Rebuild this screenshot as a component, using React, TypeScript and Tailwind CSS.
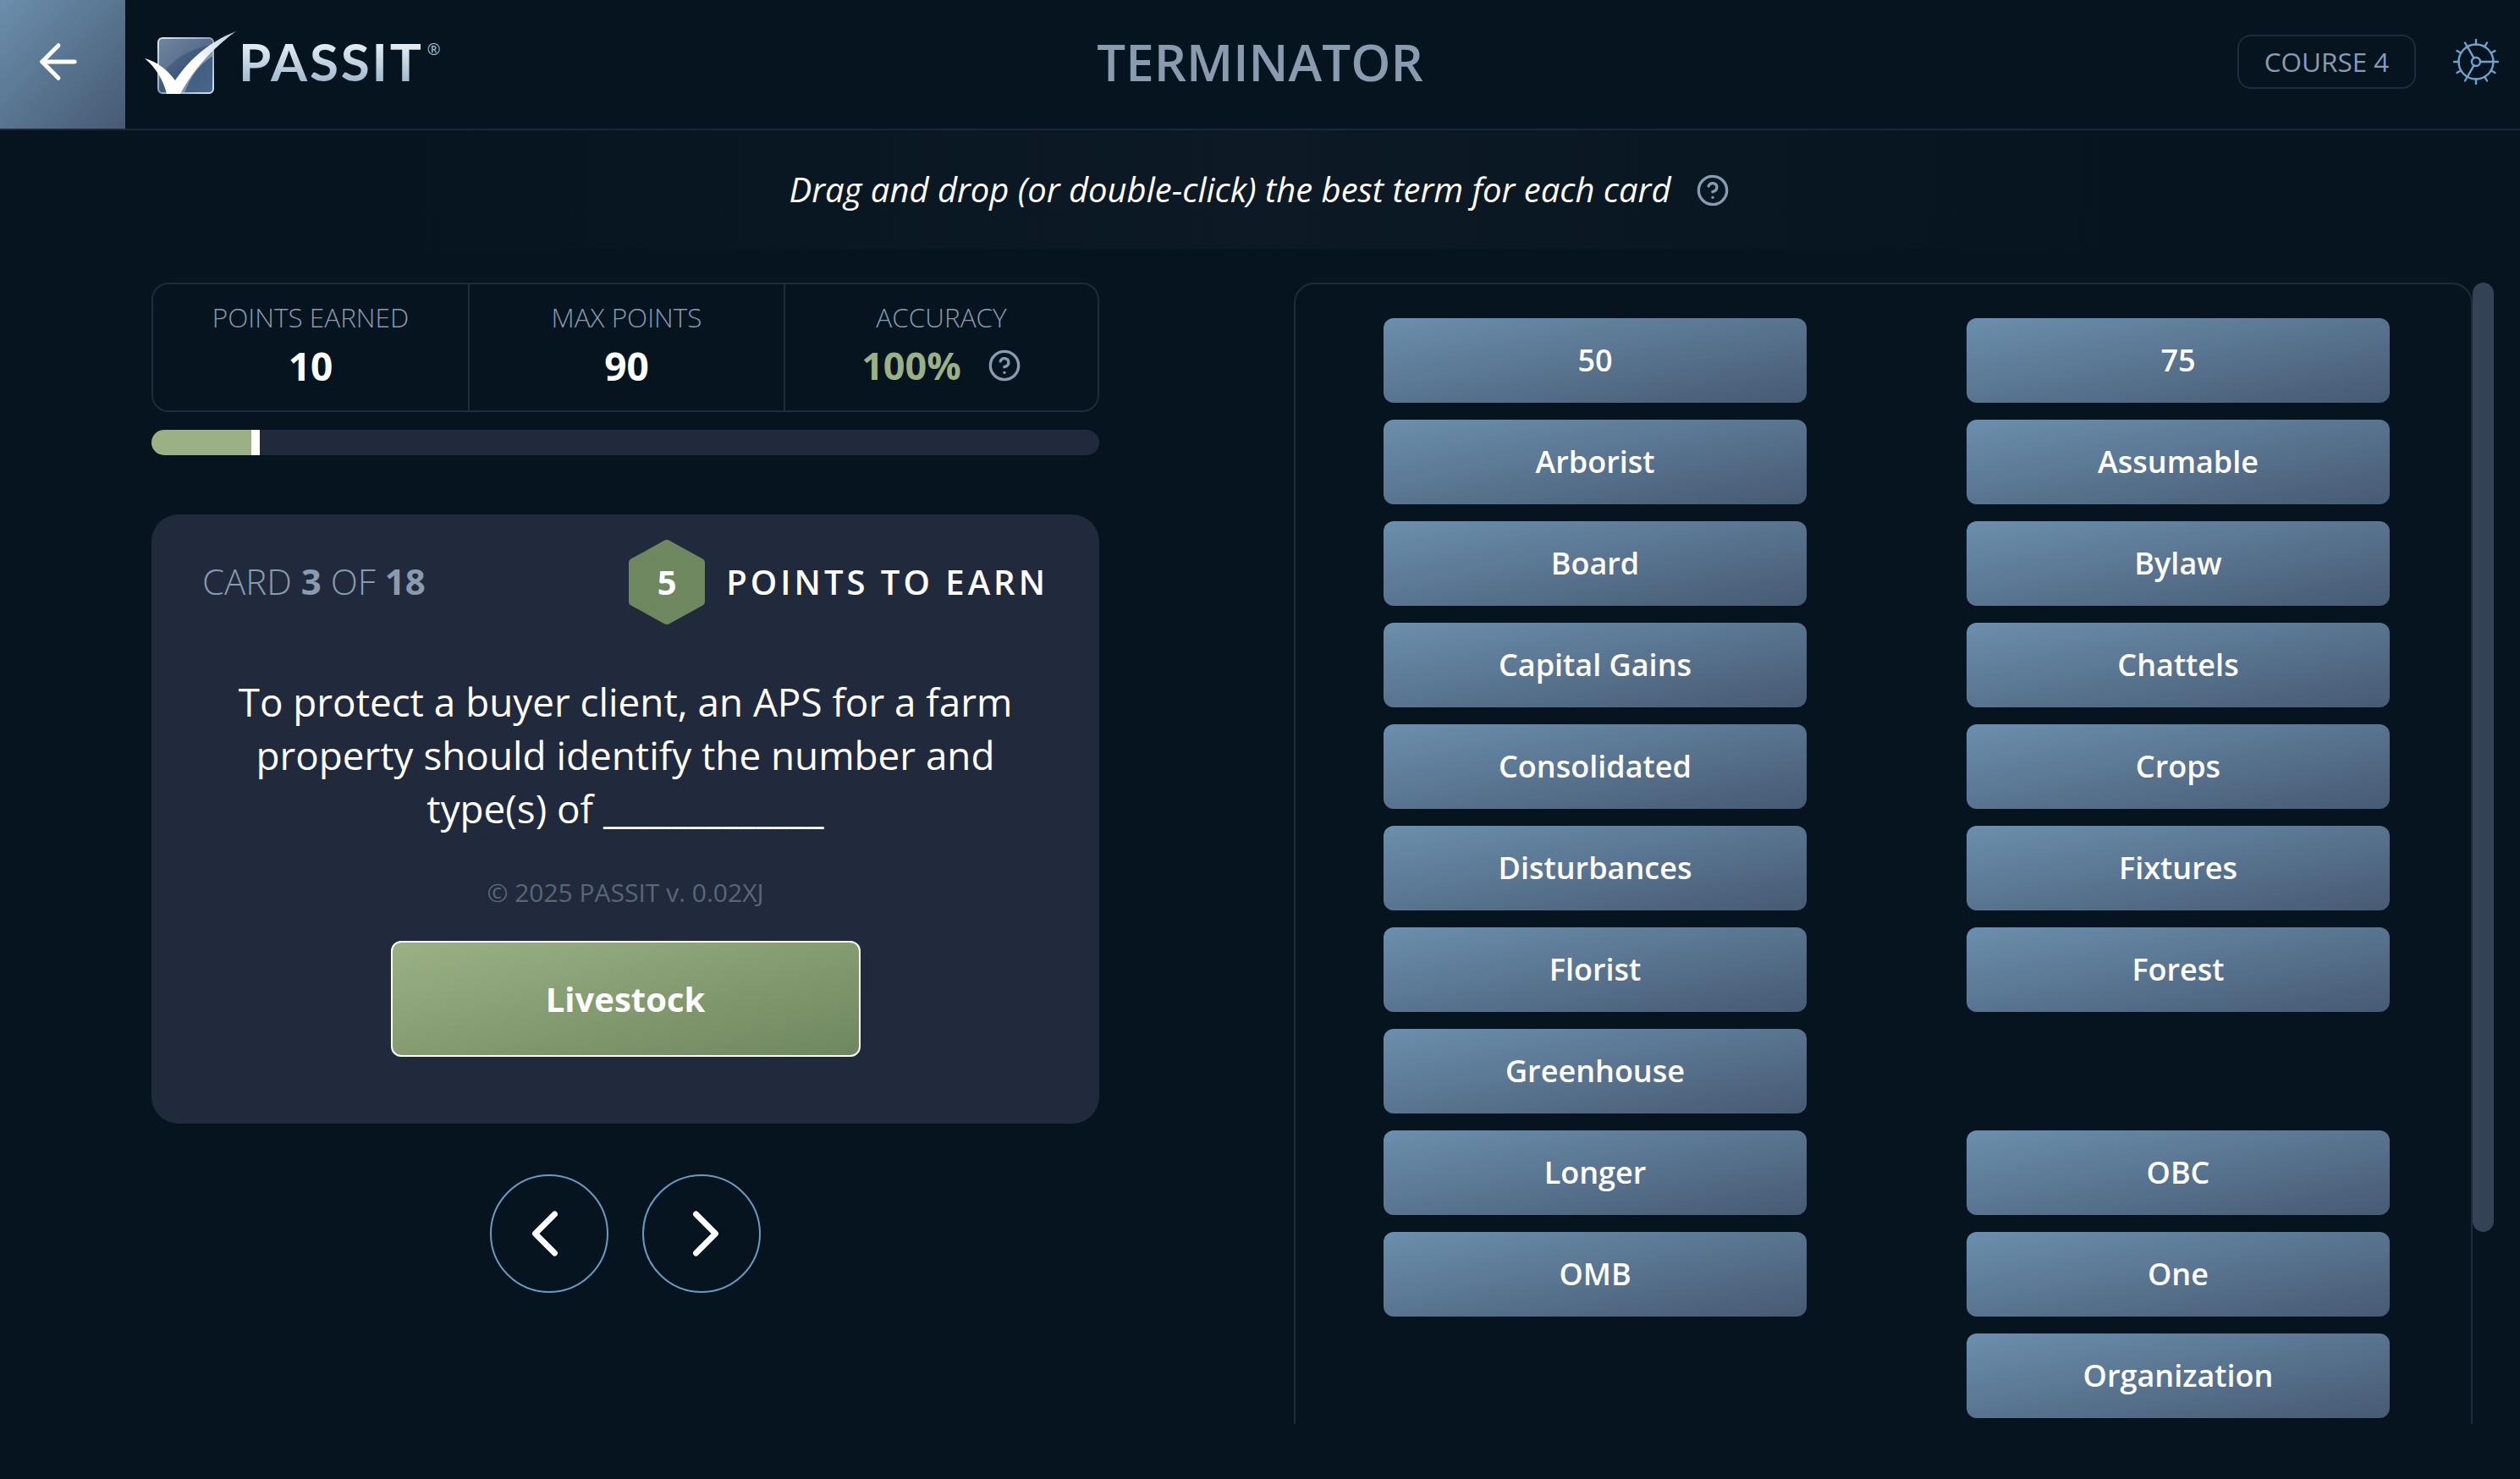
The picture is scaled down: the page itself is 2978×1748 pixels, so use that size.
import React from "react";
import { ArrowLeft, ChevronLeft, ChevronRight, CircleHelp } from "lucide-react";

const left = ["50", "Arborist", "Board", "Capital Gains", "Consolidated", "Disturbances", "Florist", "Greenhouse", "Longer", "OMB", ""];
const right = ["75", "Assumable", "Bylaw", "Chattels", "Crops", "Fixtures", "Forest", "", "OBC", "One", "Organization"];
const terms: string[] = left.flatMap((l, i) => [l, right[i]]);

function Logo() {
  return (
    <svg width="120" height="85" viewBox="165 25 120 85" className="shrink-0">
      <defs>
        <linearGradient id="box" x1="0" y1="0" x2="1" y2="1">
          <stop offset="0" stopColor="#5d7592" />
          <stop offset="0.5" stopColor="#3f5a7c" />
          <stop offset="1" stopColor="#4a678a" />
        </linearGradient>
        <linearGradient id="edge" x1="0" y1="0" x2="1" y2="1">
          <stop offset="0" stopColor="#dfe8f0" />
          <stop offset="0.5" stopColor="#8ea5bb" />
          <stop offset="1" stopColor="#d5e0ea" />
        </linearGradient>
        <linearGradient id="tick" x1="0" y1="1" x2="1" y2="0">
          <stop offset="0" stopColor="#ffffff" />
          <stop offset="0.55" stopColor="#ffffff" />
          <stop offset="1" stopColor="#b9cadb" />
        </linearGradient>
      </defs>
      <rect x="187" y="39" width="65" height="65" rx="5" fill="url(#box)" stroke="url(#edge)" strokeWidth="2" />
      <path d="M188 88 C200 66 222 52 250 47 L250 40 L193 40 C189 40 188 42 188 46 Z" fill="#ffffff" opacity="0.12" />
      <path d="M208 92 C220 74 236 60 252 50 L252 60 C238 68 226 82 218 104 L204 104 Z" fill="#c7d5e3" opacity="0.45" />
      <path d="M171 63 C186 67 197 76 207 89 C224 63 250 42 279 31 C251 51 228 77 213 105 L197 105 C193 88 184 74 171 63 Z" fill="url(#tick)" />
    </svg>
  );
}

function Gear() {
  const ticks = Array.from({ length: 12 }, (_, i) => (i * Math.PI) / 6);
  return (
    <svg width="56" height="56" viewBox="-28 -28 56 56" fill="none" stroke="#6fa3cc" strokeWidth="2.4" strokeLinecap="round">
      <circle r="20.5" />
      <circle r="5" />
      {ticks.map((a, i) => (
        <line key={i} x1={20.5 * Math.cos(a)} y1={20.5 * Math.sin(a)} x2={26 * Math.cos(a)} y2={26 * Math.sin(a)} />
      ))}
      <line x1="5" y1="0" x2="20.5" y2="0" />
      <line x1="-2.5" y1="-4.3" x2="-10.2" y2="-17.8" />
      <line x1="-2.5" y1="4.3" x2="-10.2" y2="17.8" />
    </svg>
  );
}

function Hexagon() {
  return (
    <div className="relative flex h-[100px] w-[90px] shrink-0 items-center justify-center">
      <svg width="90" height="100" viewBox="0 0 90 100" className="absolute inset-0">
        <polygon points="45,5 85,27 85,73 45,95 5,73 5,27" fill="#6f875f" stroke="#6f875f" strokeWidth="10" strokeLinejoin="round" />
      </svg>
      <span className="relative text-[40px] font-bold text-white">5</span>
    </div>
  );
}

function Stat({ label, children, border }: { label: string; children: React.ReactNode; border?: boolean }) {
  return (
    <div className={`flex flex-col items-center pt-[19px] ${border ? "border-r-2 border-[#1f2a3c]" : ""}`}>
      <div className="text-[31.5px] leading-[40px] font-light text-[#8a9bb0]">{label}</div>
      <div className="mt-[9px] flex h-[56px] items-center">{children}</div>
    </div>
  );
}

export default function App() {
  return (
    <div className="flex h-[1748px] w-full flex-col overflow-hidden bg-[#05141f] font-['Open_Sans',sans-serif] text-white">
      <header className="grid h-[154px] shrink-0 grid-cols-[1fr_auto_1fr] border-b-2 border-[#1e2639]">
        <div className="flex items-stretch">
          <button className="flex w-[148px] items-center justify-center bg-gradient-to-br from-[#6b8fad] to-[#475a73] pr-[10px] pb-[6px]">
            <ArrowLeft size={66} strokeWidth={1.8} color="#ffffff" />
          </button>
          <div className="flex items-center pb-[6px] pl-[17px]">
            <Logo />
            <span className="-ml-[3px] mb-[2px] bg-gradient-to-b from-white to-[#8fadc7] bg-clip-text font-['Lato',sans-serif] text-[62px] leading-[72px] font-bold tracking-[0.045em] text-transparent">PASSIT</span>
            <span className="mb-[30px] ml-[4px] text-[19px] leading-none text-[#a8bfd3]">®</span>
          </div>
        </div>
        <h1 className="flex items-center pb-[6px] text-[60px] font-semibold text-[#8a9bb0]">TERMINATOR</h1>
        <div className="flex items-center justify-end pr-[24px] pb-[6px]">
          <div className="flex h-[64px] w-[211px] items-center justify-center rounded-[16px] border-2 border-[#1f2a3c] text-[31.5px] text-[#8a9bb0]">COURSE 4</div>
          <div className="ml-[43px]"><Gear /></div>
        </div>
      </header>

      <div className="mb-[40px] flex h-[140px] shrink-0 items-center justify-center bg-gradient-to-r from-transparent from-[15%] via-[#0d1a26] to-transparent to-[85%]">
        <p className="-ml-[2px] text-[40px] text-white italic">Drag and drop (or double-click) the best term for each card</p>
        <CircleHelp size={40} strokeWidth={2} color="#8a9bb0" className="ml-[29px] mt-[2px]" />
      </div>

      <main className="flex min-h-0 flex-1">
        <section className="ml-[179px] w-[1120px] shrink-0">
          <div className="grid h-[153px] grid-cols-[374px_373px_1fr] rounded-[20px] border-2 border-[#1f2a3c]">
            <Stat label="POINTS EARNED" border><span className="text-[46px] font-bold">10</span></Stat>
            <Stat label="MAX POINTS" border><span className="text-[46px] font-bold">90</span></Stat>
            <Stat label="ACCURACY">
              <span className="text-[45px] font-bold text-[#9bb085]">100%</span>
              <CircleHelp size={40} strokeWidth={2} color="#8a9bb0" className="ml-[31px]" />
            </Stat>
          </div>
          <div className="mt-[21px] flex h-[30px] overflow-hidden rounded-full bg-[#202a3c]">
            <div className="w-[118px] bg-[#9bb085]" />
            <div className="w-[10px] bg-white" />
          </div>
          <div className="mt-[70px] flex h-[720px] flex-col items-center rounded-[32px] bg-[#202a3c] px-[60px] pt-[30px]">
            <div className="flex w-full items-center justify-between">
              <div className="pb-[3px] text-[42px] font-light text-[#8a9bb0]">CARD <b className="font-bold">3</b> OF <b className="font-bold">18</b></div>
              <div className="flex items-center">
                <Hexagon />
                <span className="ml-[25px] text-[40px] font-semibold tracking-[0.1em]">POINTS TO EARN</span>
              </div>
            </div>
            <p className="mt-[60px] text-center text-[45.8px] leading-[63px] font-medium">
              To protect a buyer client, an APS for a farm property should identify the number and type(s) of _____________
            </p>
            <div className="mt-[45px] text-[30px] text-[#5a6678]">© 2025 PASSIT v. 0.02XJ</div>
            <button className="mt-[35px] flex h-[137px] w-[555px] items-center justify-center rounded-[12px] border-2 border-white bg-gradient-to-br from-[#9bb085] to-[#6f875f] text-[40px] font-bold">Livestock</button>
          </div>
          <div className="mt-[60px] flex justify-center gap-[40px]">
            <button className="flex h-[140px] w-[140px] items-center justify-center rounded-full border-2 border-[#6a9bc3] pr-[10px]"><ChevronLeft size={92} strokeWidth={1.8} color="#fff" /></button>
            <button className="flex h-[140px] w-[140px] items-center justify-center rounded-full border-2 border-[#6a9bc3] pl-[10px]"><ChevronRight size={92} strokeWidth={1.8} color="#fff" /></button>
          </div>
        </section>

        <section className="ml-[230px] mb-[65px] w-[1393px] shrink-0 overflow-hidden rounded-t-[24px] border-x-2 border-t-2 border-[#1f2a3c] pt-[40px] pl-[104px]">
          <div className="grid grid-cols-[500px_500px] gap-x-[189px] gap-y-[20px]">
            {terms.map((t, i) =>
              t ? (
                <button key={i} className="h-[100px] rounded-[12px] bg-gradient-to-br from-[#6b8fad] to-[#475a73] text-[36px] font-semibold">{t}</button>
              ) : (
                <div key={i} className="h-[100px]" />
              )
            )}
          </div>
        </section>
        <div className="h-[1122px] w-[25px] shrink-0 rounded-full bg-[#344255]" />
      </main>
    </div>
  );
}
